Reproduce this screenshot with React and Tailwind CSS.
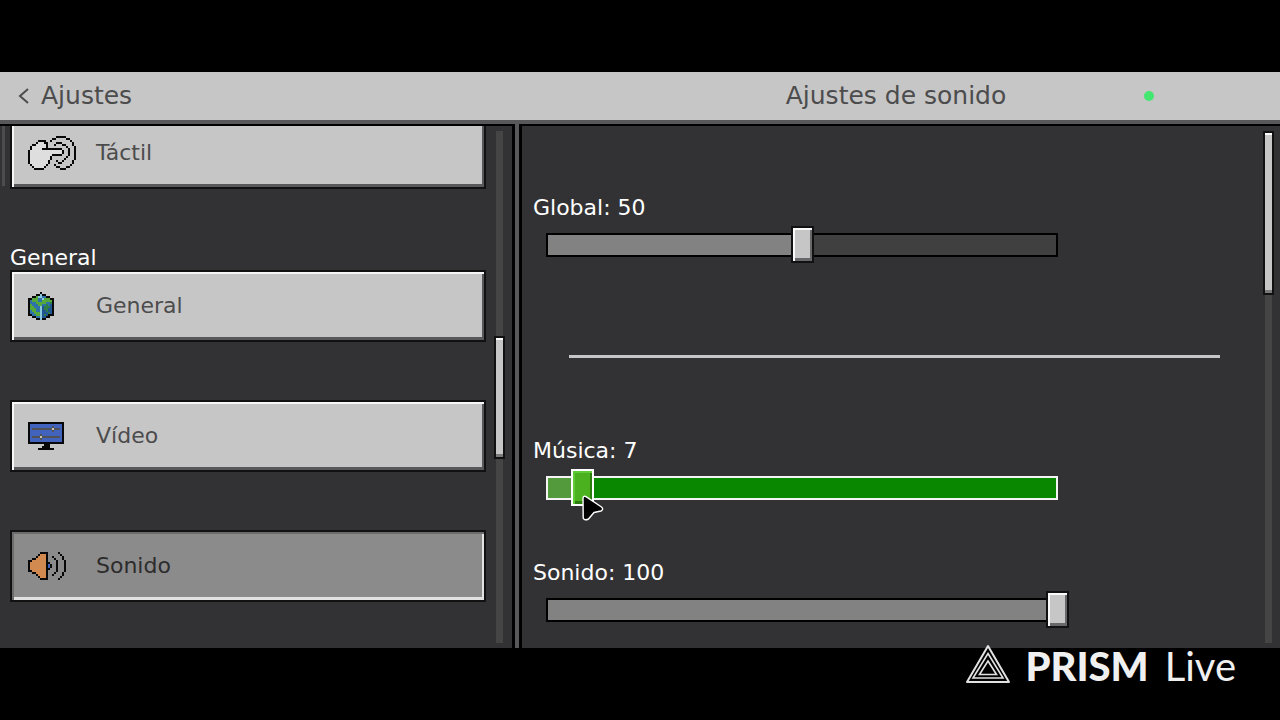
import { useState } from "react";

const HAND = [
  "..............#####.....",
  "............##.....##...",
  ".....####..#.........#..",
  "....#www##....###.....#.",
  "..##wwwww#...#...##...#.",
  ".#wwwwwww#.........#...#",
  ".#wwwww##########...#..#",
  "#wwwwwwwwwwwwwwww#..#..#",
  "#wwwwwwwwwwwwwwww#..#..#",
  "#wwwwwwwwwww#####...#..#",
  "#wwwwwwwwww#.......#...#",
  "#wwwwwwwwww#......#....#",
  "#wwwwwwwww#...#..#....#.",
  "#wwwwwwwww#....##.....#.",
  ".#wwwwwww#...#.......#..",
  "..#wwwww#.....##...##...",
  "...#####........###.....",
];

const CUBE = [
  "......#......",
  "....##c##....",
  "..##gccbb##..",
  "##gggbbcggg##",
  "#bgggbbggggg#",
  "#bbbgggggbbG#",
  "#gbbbggbbGbB#",
  "#ggbbbcBGGGB#",
  "#gggbbcBGGBB#",
  "#bggbbcBBGBB#",
  "#bbgggcBBBGB#",
  "##bbggcBGB###",
  "..##bbcBB##..",
  "....##c##....",
];

const MONITOR = [
  "##################",
  "#uuuuuuuuuuuuuuuu#",
  "#uuuuuuuuuuukuuuu#",
  "#ukkkkkkkkkkykkku#",
  "#uuuuuuuuuuukuuuu#",
  "#uuuuuuuuuuuuuuuu#",
  "#uuuuukuuuuuuuuuu#",
  "#ukkkkykkkkkkkkku#",
  "#uuuuukuuuuuuuuuu#",
  "#uuuuuuuuuuuuuuuu#",
  "##################",
  "........###.......",
  ".......####.......",
  ".....########.....",
];

const SPEAKER = [
  "......####.....#...",
  ".....#ooo#......#..",
  "....#oooo#..#....#.",
  "..##ooooo#...#...#.",
  "##ooooooo#....#...#",
  "#oooooooo##...#...#",
  "#oooooooo#u#..#...#",
  "#oooooooo#u#..#...#",
  "#oooooooo##...#...#",
  "##ooooooo#....#...#",
  "..##ooooo#...#...#.",
  "....#oooo#..#....#.",
  ".....#ooo#......#..",
  "......####.....#...",
];

const COLORS = {
  "#": "#080808",
  w: "#dedede",
  g: "#55a83a",
  G: "#2f7f45",
  b: "#2d72a8",
  B: "#1f5590",
  c: "#8cc8dc",
  u: "#4163bd",
  k: "#505255",
  y: "#c9c6b4",
  o: "#d28a50",
};

function PixelIcon({ rows }) {
  const w = rows[0].length;
  const h = rows.length;
  return (
    <svg
      width={w * 2}
      height={h * 2}
      viewBox={`0 0 ${w} ${h}`}
      shapeRendering="crispEdges"
      aria-hidden="true"
    >
      {rows.flatMap((row, y) =>
        [...row].map((c, x) =>
          COLORS[c] ? (
            <rect key={`${x}-${y}`} x={x} y={y} width="1" height="1" fill={COLORS[c]} />
          ) : null
        )
      )}
    </svg>
  );
}

function MenuButton({ icon, label, selected, onClick }) {
  return (
    <button
      type="button"
      onClick={onClick}
      aria-pressed={selected}
      className={
        "flex h-[72px] w-full shrink-0 items-center border-2 border-[#111112] px-4 text-left " +
        (selected
          ? "bg-[#8b8b8b] text-[#2c2c2d] shadow-[inset_2px_2px_0_#6c6c6c,inset_-2px_-3px_0_#e2e2e2]"
          : "bg-[#c6c6c6] text-[#4c4c4d] shadow-[inset_2px_2px_0_#f6f6f6,inset_-2px_-3px_0_#58585a]")
      }
    >
      <span className="w-[68px] shrink-0">
        <PixelIcon rows={icon} />
      </span>
      <span className="pb-0.5">{label}</span>
    </button>
  );
}

function Cursor() {
  return (
    <svg width="24" height="28" viewBox="0 0 24 28" aria-hidden="true">
      <path
        d="M1 3 Q1.500 0.500 4 1.700 L19.500 12 Q22 14.500 19 16 L12 17.500 L6.500 24 Q2.500 26 1.200 23 Z"
        fill="#000"
        stroke="#fff"
        strokeWidth="1.4"
        strokeLinejoin="round"
      />
    </svg>
  );
}

function VolumeSlider({ id, label, initial, active }) {
  const [value, setValue] = useState(initial);
  return (
    <div className="flex flex-col gap-1.5">
      <label htmlFor={id} className="leading-6 text-white">
        {label}: {value}
      </label>
      <div className="mr-[194px] ml-[2px] grid items-center">
        <div
          className={
            "mx-[11px] h-6 border-2 [grid-area:1/1] " +
            (active ? "border-[#f4f4f4] bg-[#0a8700]" : "border-black bg-[#404041]")
          }
        >
          <div
            className={active ? "h-full bg-[#539a3c]" : "h-full bg-[#828282]"}
            style={{ width: `${value}%` }}
          />
        </div>
        <input
          id={id}
          type="range"
          min="0"
          max="100"
          value={value}
          onChange={(e) => setValue(Number(e.target.value))}
          className={
            "m-0 h-[37px] w-full min-w-0 cursor-pointer appearance-none bg-transparent outline-none [grid-area:1/1] [&::-webkit-slider-thumb]:h-[37px] [&::-webkit-slider-thumb]:w-[23px] [&::-webkit-slider-thumb]:appearance-none [&::-webkit-slider-thumb]:rounded-none [&::-webkit-slider-thumb]:border-2 " +
            (active
              ? "[&::-webkit-slider-thumb]:border-white [&::-webkit-slider-thumb]:bg-[#4bb11f] [&::-webkit-slider-thumb]:shadow-[inset_2px_2px_0_#5fcb35,inset_-2px_-3px_0_#2b7d10]"
              : "[&::-webkit-slider-thumb]:border-[#111112] [&::-webkit-slider-thumb]:bg-[#c6c6c6] [&::-webkit-slider-thumb]:shadow-[inset_2px_2px_0_#fafafa,inset_-2px_-3px_0_#68686a]")
          }
        />
        {active && (
          <div className="pointer-events-none relative mx-[11px] h-[37px] [grid-area:1/1]">
            <div className="absolute top-[26px]" style={{ left: `${value}%` }}>
              <Cursor />
            </div>
          </div>
        )}
      </div>
    </div>
  );
}

function ScrollBar({ before, size }) {
  return (
    <div className="flex w-[11px] shrink-0 flex-col items-center py-[5px]" aria-hidden="true">
      <div className="w-[7px] bg-[#454546]" style={{ height: `${before}%` }} />
      <div
        className="w-[11px] border-2 border-[#111112] bg-[#c6c6c6] shadow-[inset_0_2px_0_#fff,inset_0_-3px_0_#7a7a7b]"
        style={{ height: `${size}%` }}
      />
      <div className="w-[7px] flex-1 bg-[#454546]" />
    </div>
  );
}

function PrismMark() {
  return (
    <svg width="46" height="40" viewBox="0 0 46 40" fill="none" stroke="#e2e2e2" aria-hidden="true">
      <path d="M23 2 L44 38 H2 Z" strokeWidth="2" strokeLinejoin="round" />
      <path d="M23 9.500 L38 34 H8 Z" strokeWidth="1.600" />
      <path d="M23 17 L31.500 30.500 H14.500 Z" strokeWidth="1.600" />
    </svg>
  );
}

export default function App() {
  const [section, setSection] = useState("Sonido");
  const item = (label, icon) => (
    <MenuButton
      icon={icon}
      label={label}
      selected={section === label}
      onClick={() => setSection(label)}
    />
  );

  return (
    <div className="flex h-screen flex-col bg-black pt-[72px] font-['DejaVu_Sans',sans-serif] text-[22px]">
      <header className="relative flex h-[52px] shrink-0 items-center border-b-4 border-[#58585a] bg-[#c6c6c6] text-[25px] text-[#4c4c4d]">
        <div className="w-2/5 pl-[18px]">
          <button type="button" className="flex items-center gap-3">
            <svg
              width="11"
              height="16"
              viewBox="0 0 11 16"
              fill="none"
              stroke="currentColor"
              strokeWidth="2"
              aria-hidden="true"
            >
              <path d="M10 1 L2 8 L10 15" />
            </svg>
            Ajustes
          </button>
        </div>
        <h1 className="flex-1 text-center">Ajustes de sonido</h1>
        <span className="absolute right-[126px] size-2.5 rounded-full bg-[#43e66e]" />
      </header>

      <main className="flex min-h-0 flex-1 bg-[#323234]">
        <nav className="relative flex w-2/5 border-t-2 border-black">
          <div className="absolute top-0 left-[2px] h-[60px] w-[3px] bg-[#4c4c4d]" />
          <div className="flex min-w-0 flex-1 flex-col overflow-hidden pr-2 pl-2.5">
            <div className="-mt-[9px] flex flex-col">
              {item("Táctil", HAND)}
              <h2 className="mt-[57px] leading-6 text-white">General</h2>
              <div className="flex flex-col gap-[58px]">
                {item("General", CUBE)}
                {item("Vídeo", MONITOR)}
                {item("Sonido", SPEAKER)}
              </div>
            </div>
          </div>
          <div className="flex pr-[7px]">
            <ScrollBar before={40} size={24} />
          </div>
        </nav>

        <div className="w-2.5 shrink-0 border-x-[3px] border-black bg-[#58585a]" />

        <section className="flex min-w-0 flex-1 border-t-2 border-black">
          <div className="min-w-0 flex-1 overflow-hidden pt-[70px] pl-[11px]">
            <VolumeSlider id="global" label="Global" initial={50} />
            <hr className="mt-[92px] mr-[43px] mb-[81px] ml-9 h-[3px] border-0 bg-[#c6c6c8]" />
            <div className="flex flex-col gap-[55px]">
              <VolumeSlider id="music" label="Música" initial={7} active />
              <VolumeSlider id="sound" label="Sonido" initial={100} />
            </div>
          </div>
          <div className="flex pr-1.5">
            <ScrollBar before={0} size={32} />
          </div>
        </section>
      </main>

      <footer className="z-10 flex h-[72px] shrink-0 items-start justify-end pr-11 font-['Lato',sans-serif] text-[40px] leading-10 text-[#f0f0f0]">
        <div className="-mt-1 flex gap-3.5">
          <PrismMark />
          <p className="flex gap-4 pt-0.5">
            <span className="font-black">PRISM</span>
            <span>Live</span>
          </p>
        </div>
      </footer>
    </div>
  );
}
